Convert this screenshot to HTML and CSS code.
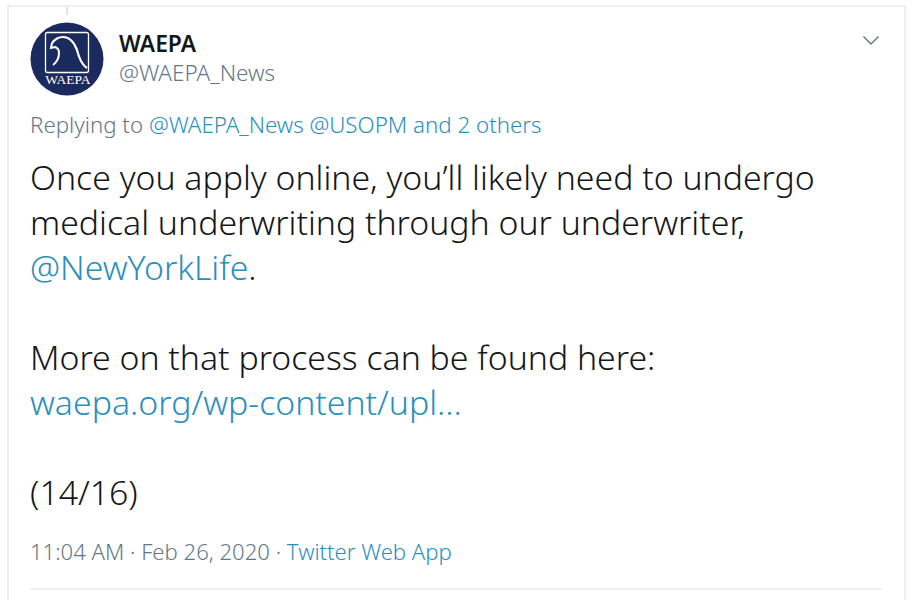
FILE: index.html
```html
<!DOCTYPE html>
<html lang="en">
<head>
    <meta charset="UTF-8">
    <meta name="viewport" content="width=device-width, initial-scale=1.0">
    <title>WAEPA tweet</title>
    <link rel="stylesheet" href="styles.css">
</head>
<body>
    <div class="tweet">
        <div class="thread-line"></div>
        <div class="tweet-head">
            <svg class="avatar" viewBox="0 0 74 74" role="img" aria-label="WAEPA">
                <circle cx="37" cy="37" r="36.5" fill="#1b2a5e"/>
                <rect x="15.500" y="10.500" width="43" height="40" rx="2" fill="none" stroke="#fff" stroke-width="1.300"/>
                <path d="M22 21C25 17 29 15 33 15c7 0 11 5 14 13 2 8 5 15 10 18" fill="none" stroke="#fff" stroke-width="2.200"/>
                <path d="M22 21l-1 5 4-1c3 1 4 3 4 6 0 5-2 9-6 12" fill="none" stroke="#fff" stroke-width="2"/>
                <text class="avatar-text" x="38" y="62" text-anchor="middle">WAEPA</text>
            </svg>
            <div class="names">
                <div class="name">WAEPA</div>
                <div class="handle">@WAEPA_News</div>
            </div>
            <svg class="caret" viewBox="0 0 18 11">
                <path d="M1.500 1.500 9 9l7.500-7.500" fill="none" stroke="#6f7a83" stroke-width="1.500"/>
            </svg>
        </div>

        <p class="reply">Replying to <a href="#">@WAEPA_News</a> <a href="#">@USOPM</a> <a href="#">and 2 others</a></p>

        <div class="tweet-text">
            <p>Once you apply online, you’ll likely need to undergo</p>
            <p>medical underwriting through our underwriter,</p>
            <p><a href="#">@NewYorkLife</a>.</p>
            <p class="blank"></p>
            <p>More on that process can be found here:</p>
            <p><a href="#">waepa.org/wp-content/upl...</a></p>
            <p class="blank"></p>
            <p>(14/16)</p>
        </div>

        <p class="meta">11:04 AM · Feb 26, 2020 · <a href="#">Twitter Web App</a></p>
        <div class="divider"></div>
    </div>
</body>
</html>
```

FILE: styles.css
```css
* {
    margin: 0;
    padding: 0;
    box-sizing: border-box;
    font-family: "Noto Sans", "Open Sans", sans-serif;
}

body {
    background-color: #fff;
    padding: 5px 9px 0 7px;
    height: 600px;
    overflow: hidden;
}

a {
    color: #2b8fbd;
    text-decoration: none;
}

.tweet {
    position: relative;
    height: 595px;
    border: 2px solid #eeeff0;
    border-bottom: none;
    padding: 15px 21px 0 21px;
}

.thread-line {
    position: absolute;
    left: 57px;
    top: 0;
    width: 2px;
    height: 8px;
    background-color: #dfe2e5;
}

.tweet-head {
    display: flex;
    align-items: flex-start;
}

.avatar {
    width: 74px;
    height: 74px;
    flex-shrink: 0;
}

.avatar-text {
    font-family: "Liberation Serif", serif;
    font-size: 13.500px;
    fill: #fff;
}

.names {
    flex: 1;
    margin-left: 15px;
    padding-top: 7px;
}

.name {
    font-size: 22.800px;
    font-weight: 600;
    line-height: 29px;
    color: #14171a;
}

.handle {
    font-size: 22.500px;
    font-weight: 300;
    line-height: 29px;
    color: #657786;
}

.caret {
    width: 18px;
    height: 11px;
    margin-top: 13px;
    margin-right: 3px;
}

.reply {
    margin-top: 14px;
    font-size: 22.300px;
    font-weight: 300;
    line-height: 30px;
    color: #657786;
}

.tweet-text {
    margin-top: 15px;
    font-size: 33.800px;
    font-weight: 300;
    line-height: 45px;
    color: #14171a;
}

.blank {
    height: 45px;
}

.meta {
    margin-top: 21px;
    font-size: 22.100px;
    font-weight: 300;
    line-height: 30px;
    color: #657786;
}

.divider {
    margin-top: 22px;
    height: 2px;
    margin-right: 1px;
    background-color: #eeeff0;
}
```
